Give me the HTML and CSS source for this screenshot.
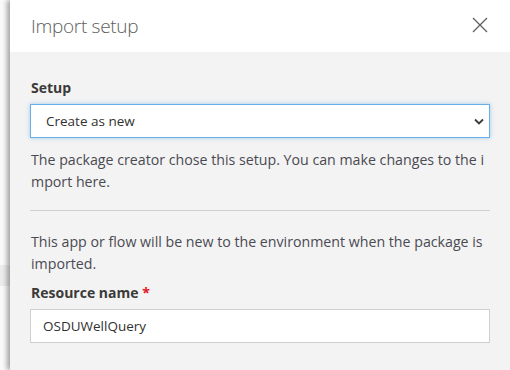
FILE: index.html
```html
<!DOCTYPE html>
<html lang="en">
<head>
  <meta charset="UTF-8">
  <title>Import setup</title>
  <link rel="stylesheet" href="styles.css">
</head>
<body>
  <div class="page-edge">
    <div class="edge-row"></div>
  </div>
  <aside class="panel">
    <header class="panel-header">
      <h1 class="panel-title">Import setup</h1>
      <button class="close-btn" aria-label="Close">
        <svg width="16" height="16" viewBox="0 0 16 16">
          <path d="M1 1 L15 15 M15 1 L1 15" stroke="#605e5c" stroke-width="1.3" fill="none"/>
        </svg>
      </button>
    </header>
    <main class="panel-body">
      <label class="field-label" for="setup">Setup</label>
      <div class="select-wrap">
        <select id="setup" class="select">
          <option>Create as new</option>
        </select>
        <svg class="chevron" width="10" height="7" viewBox="0 0 10 7">
          <path d="M1 1.5 L5 5.5 L9 1.5" stroke="#3b3a39" stroke-width="1.8" fill="none"/>
        </svg>
      </div>
      <p class="help">The package creator chose this setup. You can make changes to the i mport here.</p>
      <hr class="divider">
      <p class="help">This app or flow will be new to the environment when the package is imported.</p>
      <label class="field-label name-label" for="name">Resource name <span class="required">*</span></label>
      <input id="name" class="text-input" type="text" value="OSDUWellQuery">
    </main>
  </aside>
</body>
</html>
```

FILE: styles.css
```css
body {
  margin: 0;
  display: flex;
  height: 370px;
  overflow: hidden;
  font-family: "Open Sans", "Noto Sans", sans-serif;
  color: #323130;
  background: #fafafa;
}

.page-edge {
  width: 10px;
  flex-shrink: 0;
}

.edge-row {
  margin-top: 265px;
  height: 21px;
  background: #ececec;
}

.panel {
  flex: 1;
  background: #f3f3f3;
  box-shadow: -3px 0 5px rgba(0, 0, 0, 0.35);
  position: relative;
}

.panel-header {
  height: 52px;
  background: #fff;
  display: flex;
  align-items: center;
  justify-content: space-between;
  padding: 0 20px 0 21px;
}

.panel-title {
  margin: 0;
  font-size: 19px;
  font-weight: 300;
  color: #605e5c;
  letter-spacing: -0.3px;
}

.close-btn {
  border: 0;
  background: none;
  padding: 0;
  width: 16px;
  height: 16px;
  margin-right: 2px;
  margin-top: -3px;
}

.panel-body {
  padding: 26px 20px 0 20px;
}

.field-label {
  display: block;
  font-size: 14px;
  font-weight: 700;
  color: #3b3a39;
  margin-bottom: 7px;
  padding-left: 1px;
}

.required {
  color: #e81123;
}

.select-wrap {
  position: relative;
}

.select {
  display: block;
  width: 100%;
  height: 34px;
  box-sizing: border-box;
  border: 1px solid #69aee8;
  box-shadow: 0 0 4px rgba(105, 174, 232, 0.6);
  background: #fff;
  font-family: inherit;
  font-size: 13.5px;
  color: #323130;
  padding: 0 0 0 15px;
  appearance: none;
  outline: none;
}

.chevron {
  position: absolute;
  right: 6px;
  top: 14px;
}

.help {
  margin: 11px 0 0 1px;
  font-size: 14.2px;
  line-height: 22px;
  color: #4a4a52;
  letter-spacing: 0;
}

.divider {
  border: 0;
  border-top: 1px solid #d0d0d0;
  margin: 17px 0 20px 0;
}

.name-label {
  margin-top: 8px;
}

.text-input {
  display: block;
  width: 100%;
  height: 34px;
  box-sizing: border-box;
  border: 1px solid #cfcfcf;
  background: #fff;
  font-family: inherit;
  font-size: 13.5px;
  color: #323130;
  padding: 0 0 0 12px;
  outline: none;
}
```
